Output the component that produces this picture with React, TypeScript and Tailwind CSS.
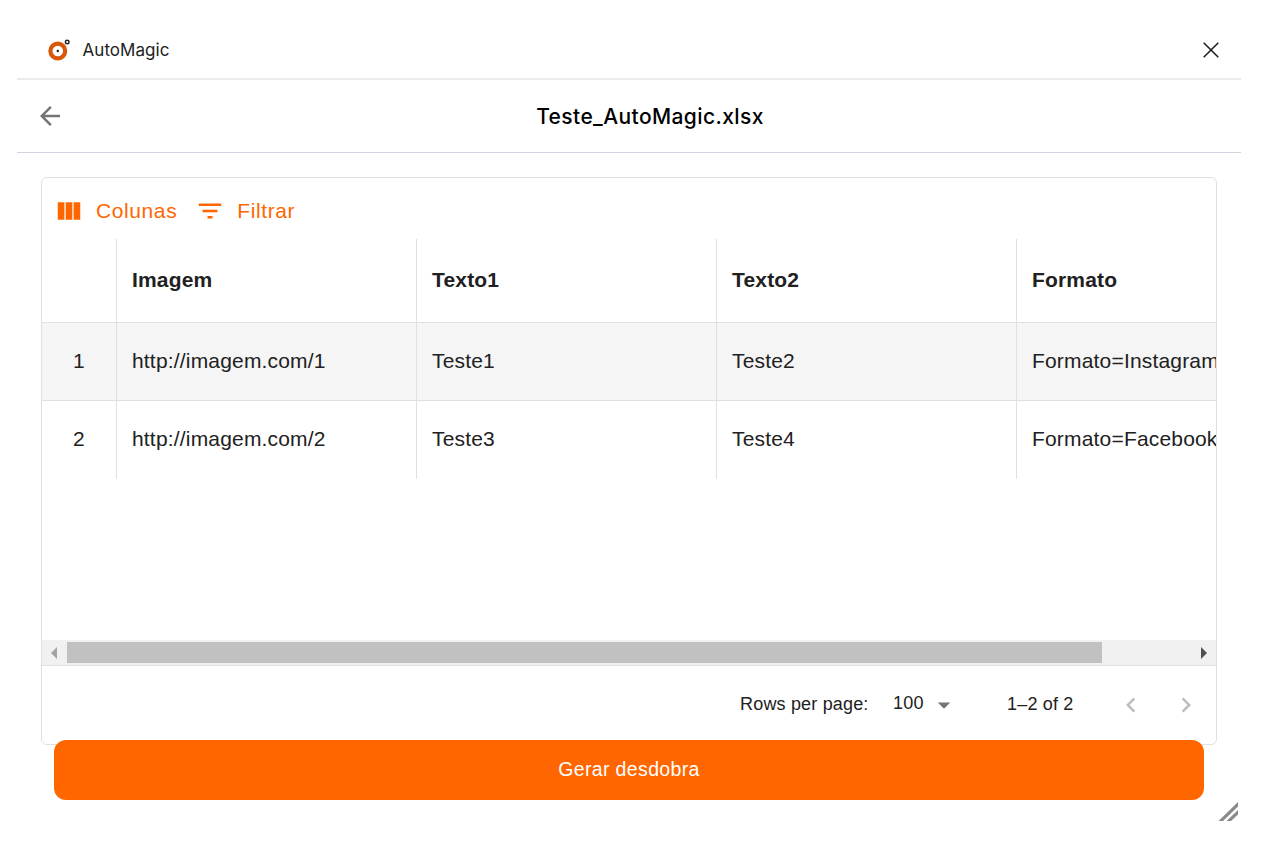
const columns = ["Imagem", "Texto1", "Texto2", "Formato"];

const rows = [
  ["http://imagem.com/1", "Teste1", "Teste2", "Formato=Instagram"],
  ["http://imagem.com/2", "Teste3", "Teste4", "Formato=Facebook"],
];

function Logo() {
  return (
    <svg width="24" height="24" viewBox="0 0 24 24" fill="none">
      <circle cx="10.8" cy="13" r="7.4" stroke="#d9560b" strokeWidth="4.2" />
      <circle cx="10.8" cy="13" r="1.2" fill="#222" />
      <circle cx="20.2" cy="4" r="1.8" stroke="#222" strokeWidth="1.4" />
    </svg>
  );
}

function TitleBar() {
  return (
    <header className="flex h-[60px] items-center border-b-2 border-[#ebebeb] pl-[30px] pr-[18px] pt-[2px]">
      <Logo />
      <span className="ml-[11.5px] text-[17px] leading-6 tracking-[0.05px] text-[#222]">AutoMagic</span>
      <button className="ml-auto flex size-6 items-center justify-center">
        <svg width="16" height="16" viewBox="0 0 16 16" stroke="#1a1a1a" strokeWidth="1.5">
          <path d="M0.7 0.7 15.3 15.3M15.3 0.7 0.7 15.3" />
        </svg>
      </button>
    </header>
  );
}

function FileBar() {
  return (
    <div className="flex h-[73px] items-center border-b border-[#d0d4de] pl-[15px]">
      <button className="flex size-9 items-center justify-center">
        <svg width="30" height="30" viewBox="0 0 24 24" fill="#757575">
          <path d="M20 11H7.83l5.59-5.59L12 4l-8 8 8 8 1.41-1.41L7.83 13H20v-2z" />
        </svg>
      </button>
      <h1 className="flex-1 pr-[9px] pt-px text-center text-[21px] font-medium leading-8 tracking-[0.4px] text-black">
        Teste_AutoMagic.xlsx
      </h1>
    </div>
  );
}

function Toolbar() {
  return (
    <div className="flex h-[61px] items-center pl-[12px] pt-[4px] text-[21px] leading-8 tracking-[0.6px] text-[#ff6600]">
      <button className="flex items-center">
        <svg width="30" height="30" viewBox="0 0 24 24" fill="currentColor">
          <path d="M14.67 5v14H9.33V5h5.34zm1 14H21V5h-5.33v14zm-7.34 0V5H3v14h5.33z" />
        </svg>
        <span className="ml-[12px]">Colunas</span>
      </button>
      <button className="ml-[18px] flex items-center">
        <svg width="30" height="30" viewBox="0 0 24 24" fill="currentColor">
          <path d="M10 18h4v-2h-4v2zM3 6v2h18V6H3zm3 7h12v-2H6v2z" />
        </svg>
        <span className="ml-[12px]">Filtrar</span>
      </button>
    </div>
  );
}

function Table() {
  return (
    <div className="h-[401px] overflow-hidden text-[21px] leading-8 tracking-[0.18px] text-[#212121]">
      <div className="grid h-[84px] w-[1275px] grid-cols-[75px_repeat(4,300px)] border-b border-[#e0e0e0] font-bold">
        <div className="border-r border-[#e0e0e0]" />
        {columns.map((name) => (
          <div key={name} className="flex items-center border-r border-[#e0e0e0] pb-[2px] pl-[15px]">
            {name}
          </div>
        ))}
      </div>
      {rows.map((cells, index) => (
        <div
          key={cells[0]}
          className="grid h-[78px] w-[1275px] grid-cols-[75px_repeat(4,300px)] border-[#e0e0e0] odd:border-b-0 even:border-b even:bg-[#f5f5f5]"
        >
          <div className="flex items-center justify-center border-r border-[#e0e0e0] pb-[2px]">{index + 1}</div>
          {cells.map((cell) => (
            <div key={cell} className="flex items-center border-r border-[#e0e0e0] pb-[2px] pl-[15px]">
              {cell}
            </div>
          ))}
        </div>
      ))}
    </div>
  );
}

function Scrollbar() {
  return (
    <div className="flex h-[26px] items-center border-b border-[#e0e0e0] bg-[#f1f1f1]">
      <div className="flex w-[25px] justify-center pr-px">
        <svg width="6" height="12" viewBox="0 0 6 12" fill="#a3a3a3">
          <path d="M6 0v12L0 6z" />
        </svg>
      </div>
      <div className="h-[21px] w-[1035px] bg-[#c1c1c1]" />
      <div className="ml-auto flex w-[25px] justify-center">
        <svg width="6" height="12" viewBox="0 0 6 12" fill="#505050">
          <path d="M0 0v12l6-6z" />
        </svg>
      </div>
    </div>
  );
}

function Pagination() {
  return (
    <div className="flex h-[76px] items-center justify-end pr-[15.5px] text-[18px] leading-7 tracking-[0.17px] text-[#212121]">
      <span>Rows per page:</span>
      <span className="ml-[24.5px] pb-[2px]">100</span>
      <svg className="ml-[5px] mt-px" width="30" height="30" viewBox="0 0 24 24" fill="#757575">
        <path d="M7 10l5 5 5-5z" />
      </svg>
      <span className="ml-[48.5px]">1–2 of 2</span>
      <svg className="ml-[42px] mt-[2px]" width="30" height="30" viewBox="0 0 24 24" fill="#bdbdbd">
        <path d="M15.41 7.41L14 6l-6 6 6 6 1.41-1.41L10.83 12z" />
      </svg>
      <svg className="ml-[25px] mt-[2px]" width="30" height="30" viewBox="0 0 24 24" fill="#bdbdbd">
        <path d="M10 6L8.59 7.41 13.17 12l-4.58 4.59L10 18l6-6z" />
      </svg>
    </div>
  );
}

export default function App() {
  return (
    <div className="h-[846px] w-[1270px] overflow-hidden bg-white pl-[17px] pr-[29px] pt-5 font-['Inter',sans-serif]">
      <TitleBar />
      <FileBar />
      <main className="px-6 pt-6 font-['Liberation_Sans',Arial,sans-serif]">
        <section className="h-[568px] overflow-hidden rounded-md border border-[#e0e0e0]">
          <Toolbar />
          <Table />
          <Scrollbar />
          <Pagination />
        </section>
        <button className="relative -mt-[5px] ml-[13px] flex h-[60px] w-[1150px] items-center justify-center rounded-xl bg-[#ff6600] text-[19.5px] tracking-[0.36px] text-white">
          Gerar desdobra
        </button>
      </main>
      <div className="flex justify-end pr-[3px] pt-px">
        <svg width="20" height="20" viewBox="0 0 20 20" fill="#8a8a8a">
          <path d="M0.5 20 20 1v4.5L5 20zM8.5 20 20 9v4.5l-7 6.5z" />
        </svg>
      </div>
    </div>
  );
}
